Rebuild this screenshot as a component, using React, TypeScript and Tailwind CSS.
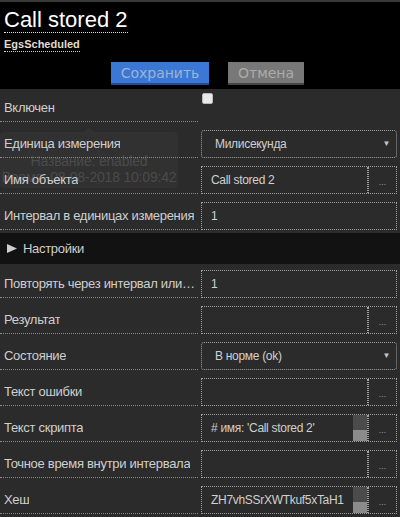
import React from "react";

const labelCls =
  "relative z-10 w-[198px] h-[28px] flex items-center pl-[4px] border-b border-dotted border-[#8a8a8a] text-[13px] tracking-[-0.3px] text-[#cfcfcf] whitespace-nowrap overflow-hidden";

function Row({
  label,
  children,
  h = "h-[36px]",
}: {
  label: string;
  children?: React.ReactNode;
  h?: string;
}) {
  return (
    <div className={`flex items-end ${h}`}>
      <div className={labelCls}>
        <span className="block truncate">{label}</span>
      </div>
      <div className="relative z-10 ml-[3px] w-[196px] h-[28px]">{children}</div>
    </div>
  );
}

function Dots() {
  return (
    <div className="w-[28px] h-full border-l border-dotted border-[#a0a0a0] flex items-center justify-center pt-[5px] text-[9px] text-[#9a9a9a] tracking-[0px]">
      ...
    </div>
  );
}

function Input({
  value,
  button,
  scroll,
  second,
}: {
  value?: string;
  button?: boolean;
  scroll?: [number, number];
  second?: string;
}) {
  return (
    <div className="w-full h-full flex border border-dotted border-[#a0a0a0] bg-[#2b2b2b]">
      <div
        className={`relative flex-1 h-full overflow-hidden ${
          button ? "border-r border-dotted border-[#a0a0a0]" : ""
        }`}
      >
        {scroll ? (
          <>
            <div className="pl-[9px] pt-[5px] text-[12px] leading-[16px] tracking-[-0.3px] text-[#d0d0d0] whitespace-nowrap">
              <div>{value}</div>
              <div>{second}</div>
            </div>
            <div className="absolute right-0 top-0 bottom-0 w-[14px] flex flex-col">
              <div className="flex-1 bg-[#4b4b4b]" />
              <div className="bg-[#8b8b8b]" style={{ height: scroll[1] }} />
            </div>
          </>
        ) : (
          <div className="h-full flex items-center pl-[9px] text-[12px] tracking-[-0.3px] text-[#d0d0d0] whitespace-nowrap">
            {value}
          </div>
        )}
      </div>
      {button && <Dots />}
    </div>
  );
}

function Select({ value }: { value: string }) {
  return (
    <div className="w-full h-full flex items-center justify-between border border-dotted border-[#a0a0a0] rounded-[3px] pl-[13px] pr-[6px] text-[12px] tracking-[-0.3px] text-[#d0d0d0]">
      <span>{value}</span>
      <span className="text-[8px] text-[#c4c4c4]">▼</span>
    </div>
  );
}

export default function App() {
  return (
    <div className="w-[400px] h-[517px] overflow-hidden bg-[#2b2b2b] font-['Liberation_Sans',Arial,sans-serif]">
      <div className="bg-black">
        <div className="h-[2px] bg-[#3a3a3a]" />
        <div className="pt-[5px] px-[4px] flex flex-col items-start">
          <span className="block text-[22px] leading-[25px] text-white border-b border-dotted border-[#e0e0e0]">
            Call stored 2
          </span>
          <span className="block mt-[5px] text-[11px] leading-[13px] font-bold text-[#e3dccb] border-b border-dotted border-[#d8d0c0]">
            EgsScheduled
          </span>
        </div>
        <div className="flex pl-[111px] gap-[19px] mt-[10px] pb-[4px] font-['DejaVu_Sans',sans-serif] text-[14px] leading-[20px]">
          <div className="w-[98px] h-[23px] bg-[#3b78d6] border-b-2 border-[#1d4c9c] text-[#9fb3d2] flex items-center justify-center">
            Сохранить
          </div>
          <div className="w-[76px] h-[23px] bg-[#787878] border-b-2 border-[#454545] text-[#ababab] flex items-center justify-center">
            Отмена
          </div>
        </div>
      </div>

      <div className="relative">
        {/* tooltip (fading) */}
        <div className="absolute left-0 top-[43px] w-[178px] h-[56px] rounded-[4px] bg-[#313131] pt-[21px] text-center text-[14px] leading-[16px] tracking-[-0.2px] text-[#4b4b4b] z-0">
          <div className="absolute left-[84px] top-[-5px] w-0 h-0 border-l-[5px] border-r-[5px] border-b-[5px] border-l-transparent border-r-transparent border-b-[#313131]" />
          <div>Название: enabled</div>
          <div>Время: 08-08-2018 10:09:42</div>
        </div>

        <div className="flex items-end h-[33px]">
          <div className={labelCls}>
            <span className="block truncate">Включен</span>
          </div>
          <div className="relative z-10 ml-[3px] w-[196px] h-[28px]">
            <div className="ml-[1px] mt-[-1px] w-[11px] h-[11px] bg-[#e9e9e9] border border-[#b8b8b8] rounded-[2px]" />
          </div>
        </div>
        <Row label="Единица измерения">
          <Select value="Милисекунда" />
        </Row>
        <Row label="Имя объекта">
          <Input value="Call stored 2" button />
        </Row>
        <Row label="Интервал в единицах измерения">
          <Input value="1" />
        </Row>

        <div className="mt-[3px] h-[31px] bg-[#121212] flex items-center pl-[7px] gap-[6px] text-[13px] tracking-[-0.3px] text-[#cfcfcf]">
          <svg width="10" height="9" viewBox="0 0 10 9">
            <polygon points="0,0 10,4.5 0,9" fill="#cfcfcf" />
          </svg>
          <span>Настройки</span>
        </div>

        <Row label="Повторять через интервал или через время" h="h-[34px]">
          <Input value="1" />
        </Row>
        <Row label="Результат">
          <Input button />
        </Row>
        <Row label="Состояние">
          <Select value="В норме (ok)" />
        </Row>
        <Row label="Текст ошибки">
          <Input button />
        </Row>
        <Row label="Текст скрипта">
          <Input
            value="# имя: 'Call stored 2'"
            second="о"
            button
            scroll={[15, 11]}
          />
        </Row>
        <Row label="Точное время внутри интервала">
          <Input button />
        </Row>
        <Row label="Хеш">
          <Input
            value="ZH7vhSSrXWTkuf5xTaH1"
            second="о"
            button
            scroll={[17, 11]}
          />
        </Row>
      </div>
    </div>
  );
}
